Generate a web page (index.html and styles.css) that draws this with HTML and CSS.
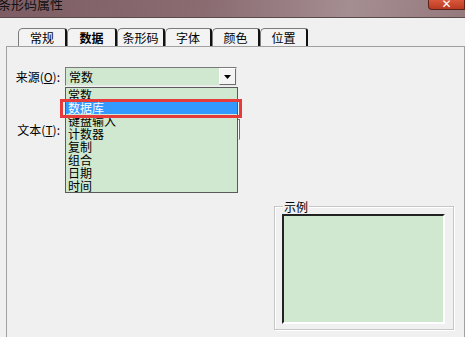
FILE: index.html
```html
<!DOCTYPE html>
<html lang="zh-CN">
<head>
    <meta charset="UTF-8">
    <meta name="viewport" content="width=device-width, initial-scale=1.0">
    <title>条形码属性</title>
    <link rel="stylesheet" href="styles.css">
</head>
<body>
    <div class="window">
        <div class="titlebar">
            <span class="title">条形码属性</span>
            <span class="close">✕</span>
        </div>

        <div class="body">
            <div class="tabs">
                <div class="tab">常规</div>
                <div class="tab active">数据</div>
                <div class="tab">条形码</div>
                <div class="tab">字体</div>
                <div class="tab">颜色</div>
                <div class="tab">位置</div>
            </div>

            <div class="pane">
                <div class="row">
                    <label class="lbl">来源(<u>O</u>):</label>
                    <div class="combo">
                        <span class="combo-value">常数</span>
                        <span class="combo-btn">
                            <svg width="7" height="4" viewBox="0 0 7 4"><path d="M0 0h7L3.5 4z" fill="#000"/></svg>
                        </span>

                        <!-- opened dropdown list -->
                        <ul class="list">
                            <li>常数</li>
                            <li class="selected">数据库</li>
                            <li>键盘输入</li>
                            <li>计数器</li>
                            <li>复制</li>
                            <li>组合</li>
                            <li>日期</li>
                            <li>时间</li>
                        </ul>
                        <div class="mark"></div>
                    </div>
                </div>

                <div class="row row-text">
                    <label class="lbl">文本(<u>T</u>):</label>
                    <div class="field"></div>
                </div>

                <div class="sample">
                    <span class="sample-title">示例</span>
                    <div class="preview"></div>
                </div>
            </div>
        </div>
    </div>
</body>
</html>
```

FILE: styles.css
```css
* {
    box-sizing: border-box;
}

body {
    margin: 0;
    width: 465px;
    height: 337px;
    overflow: hidden;
    background: #f0f0f0;
    font-family: "Noto Sans CJK SC", "DejaVu Sans", sans-serif;
    font-size: 12px;
    color: #000;
}

.window {
    display: flex;
    flex-direction: column;
    height: 337px;
}

/* title bar, only its lower part is on screen */
.titlebar {
    height: 18px;
    display: flex;
    justify-content: space-between;
    align-items: flex-start;
    background: linear-gradient(100deg, #7d5d63 0%, #8a6c71 45%, #a58e91 75%, #94797d 100%);
    border-bottom: 1px solid #5b4a4d;
    overflow: hidden;
}

.title {
    margin: -4px 0 0 -2px;
    font-size: 13px;
    line-height: 15px;
    color: #111;
}

.close {
    width: 37px;
    height: 10px;
    margin-right: 0;
    background: linear-gradient(#d9583b, #b83a22);
    border: 1px solid #5e2318;
    border-top: 0;
    border-radius: 0 0 0 4px;
    color: #fff;
    font-size: 12px;
    line-height: 6px;
    text-align: center;
    overflow: hidden;
}

.body {
    flex: 1;
    display: flex;
    flex-direction: column;
    padding-top: 10px;
}

.tabs {
    display: flex;
    margin-left: 18px;
    height: 18px;
}

.tab {
    height: 18px;
    padding-top: 1px;
    text-align: center;
    line-height: 16px;
    border-top: 1px solid #7c7c7c;
    border-left: 1px solid #7c7c7c;
    border-right: 2px solid #111;
    border-radius: 5px 3px 0 0;
    background: #f3f3f3;
}

.tab:nth-child(1) { width: 49px; }
.tab:nth-child(2) { width: 50px; }
.tab:nth-child(3) { width: 48px; }
.tab:nth-child(4) { width: 47px; }
.tab:nth-child(5) { width: 48px; }
.tab:nth-child(6) { width: 48px; }

.tab.active {
    font-weight: bold;
}

.pane {
    flex: 1;
    margin-left: 6px;
    border-top: 1px solid #a0a0a0;
    border-left: 1px solid #a0a0a0;
    border-right: 1px solid #a0a0a0;
    padding-top: 20px;
    display: flex;
    flex-direction: column;
}

.row {
    display: flex;
    align-items: center;
}

.lbl {
    width: 53px;
    margin-right: 5px;
    text-align: right;
    line-height: 13px;
}

.combo {
    position: relative;
    width: 172px;
    height: 19px;
    display: flex;
    align-items: center;
    justify-content: space-between;
    background: #cfe8cf;
    border: 1px solid;
    border-color: #7a7a7a #e8e8e8 #e8e8e8 #7a7a7a;
}

.combo-value {
    padding-left: 3px;
    line-height: 13px;
}

.combo-btn {
    width: 17px;
    height: 17px;
    display: flex;
    align-items: center;
    justify-content: center;
    background: #f4f4f4;
    border: 1px solid;
    border-color: #fff #6e6e6e #6e6e6e #fff;
}

.list {
    position: absolute;
    top: 19px;
    left: -1px;
    width: 173px;
    margin: 0;
    padding: 0;
    list-style: none;
    background: #cfe8cf;
    border: 1px solid #5a5a5a;
    z-index: 2;
}

.list li {
    height: 13px;
    line-height: 13px;
    padding-left: 2px;
}

.list li.selected {
    background: #3399ff;
    color: #fff;
}

/* red annotation box round the chosen item */
.mark {
    position: absolute;
    top: 31px;
    left: -6px;
    width: 182px;
    height: 19px;
    border: 3px solid #e63b3b;
    z-index: 3;
}

.row-text {
    margin-top: 33px;
}

.field {
    width: 175px;
    height: 21px;
    background: #fff;
    border: 1px solid;
    border-color: #7a7a7a #6a6a6a #e0e0e0 #7a7a7a;
}

.sample {
    margin: 66px 0 0 267px;
    width: 180px;
    height: 124px;
    border: 1px solid #c6c6c6;
    box-shadow: inset 1px 1px #fff, 1px 1px #fff;
    padding: 4px 8px 5px 7px;
    display: flex;
    flex-direction: column;
}

.sample-title {
    align-self: flex-start;
    margin: -11px 0 0 1px;
    padding: 0 1px;
    background: #f0f0f0;
    line-height: 13px;
}

.preview {
    flex: 1;
    margin-top: 1px;
    background: #cfe8cf;
    border: 2px solid;
    border-color: #222 #fff #fff #222;
}
```
